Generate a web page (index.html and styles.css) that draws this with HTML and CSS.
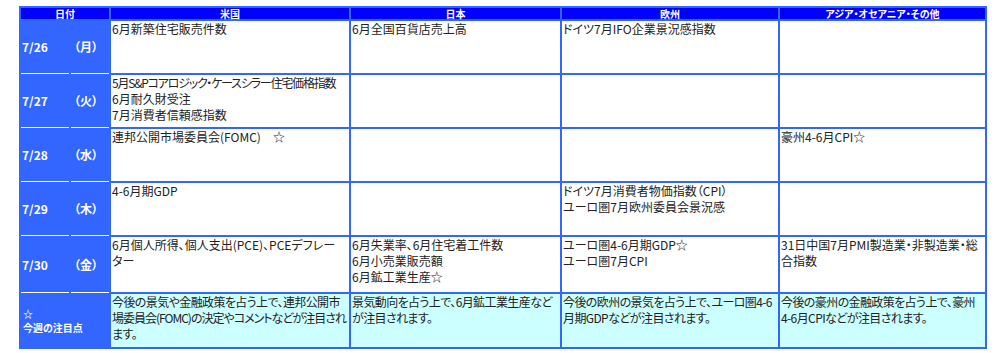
FILE: index.html
```html
<!DOCTYPE html>
<html lang="ja">
<head>
<meta charset="utf-8">
<title>今週の経済指標</title>
<link rel="stylesheet" href="styles.css">
</head>
<body>
<table class="cal">
  <colgroup>
    <col class="c-date"><col class="c-wd"><col class="c-us"><col class="c-jp"><col class="c-eu"><col class="c-as">
  </colgroup>
  <thead>
    <tr class="head">
      <th colspan="2">日付</th>
      <th>米国</th>
      <th>日本</th>
      <th>欧州</th>
      <th>アジア・オセアニア・その他</th>
    </tr>
  </thead>
  <tbody>
    <tr class="r1">
      <td class="date">7/26</td><td class="wd">（月）</td>
      <td>6月新築住宅販売件数</td>
      <td>6月全国百貨店売上高</td>
      <td>ドイツ7月IFO企業景況感指数</td>
      <td></td>
    </tr>
    <tr class="r2">
      <td class="date">7/27</td><td class="wd">（火）</td>
      <td><span class="kana-tight">5月S&amp;Pコアロジック・ケースシラー住宅価格指数</span><br>6月耐久財受注<br>7月消費者信頼感指数</td>
      <td></td>
      <td></td>
      <td></td>
    </tr>
    <tr class="r3">
      <td class="date">7/28</td><td class="wd">（水）</td>
      <td>連邦公開市場委員会(FOMC)　☆</td>
      <td></td>
      <td></td>
      <td>豪州4-6月CPI☆</td>
    </tr>
    <tr class="r4">
      <td class="date">7/29</td><td class="wd">（木）</td>
      <td>4-6月期GDP</td>
      <td></td>
      <td>ドイツ7月消費者物価指数（CPI）<br>ユーロ圏7月欧州委員会景況感</td>
      <td></td>
    </tr>
    <tr class="r5">
      <td class="date">7/30</td><td class="wd">（金）</td>
      <td>6月個人所得、個人支出(PCE)、PCEデフレー<br>ター</td>
      <td>6月失業率、6月住宅着工件数<br>6月小売業販売額<br>6月鉱工業生産☆</td>
      <td>ユーロ圏4-6月期GDP☆<br>ユーロ圏7月CPI</td>
      <td>31日中国7月PMI製造業・非製造業・総<br>合指数</td>
    </tr>
    <tr class="r6 focus">
      <td class="label" colspan="2">☆<br>今週の注目点</td>
      <td>今後の景気や金融政策を占う上で、連邦公開市<br><span class="kana-tighter">場委員会(FOMC)の決定やコメントなどが注目され</span><br>ます。</td>
      <td>景気動向を占う上で、6月鉱工業生産など<br>が注目されます。</td>
      <td>今後の欧州の景気を占う上で、ユーロ圏4-6<br>月期GDPなどが注目されます。</td>
      <td>今後の豪州の金融政策を占う上で、豪州<br>4-6月CPIなどが注目されます。</td>
    </tr>
  </tbody>
</table>
</body>
</html>
```

FILE: styles.css
```css
html, body {
  margin: 0;
  padding: 0;
  background: #ffffff;
}

body {
  font-family: "Noto Sans CJK JP", "Noto Sans", sans-serif;
  font-feature-settings: "palt";
}

.cal {
  margin: 6px 0 0 19px;
  width: 968px;
  table-layout: fixed;
  border-collapse: separate;
  border-spacing: 2px;
  background: #3366ff;
}

.c-date { width: 48px; }
.c-wd { width: 38px; }
.c-us { width: 238px; }
.c-jp { width: 209px; }
.c-eu { width: 216px; }
.c-as { width: 205px; }

.head th {
  height: 11px;
  padding: 0;
  background: #0000ff;
  color: #ffffff;
  font-size: 10px;
  line-height: 11px;
  font-weight: bold;
  text-align: center;
  white-space: nowrap;
}

.cal td {
  padding: 0 0 0 1px;
  background: #ffffff;
  color: #222222;
  font-size: 12px;
  line-height: 16px;
  vertical-align: top;
  white-space: nowrap;
  overflow: hidden;
}

.kana-tight {
  letter-spacing: -1.2px;
}

.kana-tighter {
  letter-spacing: -1px;
}

.cal td.date,
.cal td.wd {
  background: #3366ff;
  color: #ffffff;
  font-weight: bold;
  font-size: 12px;
  vertical-align: middle;
  box-shadow: 0 1px 0 #ffffff;
}

.cal td.wd {
  padding-left: 3px;
}

.r1 td { height: 52px; }
.r2 td { height: 52px; }
.r3 td { height: 52px; }
.r4 td { height: 52px; }
.r5 td { height: 55px; }
.r6 td { height: 53px; }

.focus td {
  background: #ccffff;
  letter-spacing: -0.6px;
}

.cal td.label {
  background: #3366ff;
  color: #ffffff;
  font-weight: bold;
  font-size: 10px;
  line-height: 14px;
  letter-spacing: 0;
  vertical-align: middle;
  padding-left: 2px;
}
```
